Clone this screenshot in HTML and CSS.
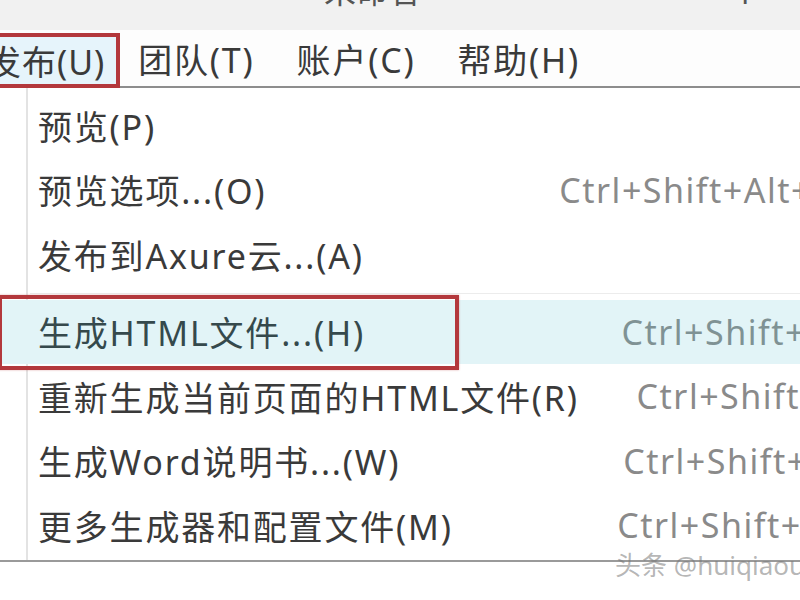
FILE: index.html
```html
<!DOCTYPE html>
<html lang="zh-CN">
<head>
<meta charset="utf-8">
<title>发布菜单</title>
<link rel="stylesheet" href="styles.css">
</head>
<body>
<div class="screen">
  <div class="titlebar">
    <span class="title">未命名</span>
    <span class="title-mark">卜</span>
  </div>
  <div class="menubar">
    <div class="menu-item active">发布(U)</div>
    <div class="menu-item">团队(T)</div>
    <div class="menu-item">账户(C)</div>
    <div class="menu-item">帮助(H)</div>
    <div class="menu-fill"></div>
  </div>
  <div class="dropdown">
    <div class="row"><span class="label">预览(P)</span><span class="key"></span></div>
    <div class="row"><span class="label">预览选项...(O)</span><span class="key">Ctrl+Shift+Alt+P</span></div>
    <div class="row"><span class="label">发布到Axure云...(A)</span><span class="key"></span></div>
    <div class="sep"></div>
    <div class="row hot"><span class="label">生成HTML文件...(H)</span><span class="key">Ctrl+Shift+O</span><span class="mark"></span></div>
    <div class="row"><span class="label">重新生成当前页面的HTML文件(R)</span><span class="key">Ctrl+Shift+I</span></div>
    <div class="row"><span class="label">生成Word说明书...(W)</span><span class="key">Ctrl+Shift+D</span></div>
    <div class="row"><span class="label">更多生成器和配置文件(M)</span><span class="key">Ctrl+Shift+M</span></div>
  </div>
  <div class="watermark">头条 @huiqiaou</div>
</div>
</body>
</html>
```
FILE: styles.css
```css
html, body {
  margin: 0;
  padding: 0;
  background: #ffffff;
}
.screen {
  position: relative;
  width: 800px;
  height: 600px;
  overflow: hidden;
  font-family: "Noto Sans", "Noto Sans CJK SC", sans-serif;
  color: #3a3a3a;
  background: #ffffff;
}
.titlebar {
  height: 30px;
  background: #f1f1f1;
  display: flex;
  overflow: hidden;
}
.title {
  margin-left: 324px;
  margin-top: -25px;
  font-size: 32px;
  line-height: 32px;
  color: #555;
}
.title-mark {
  margin-left: 312px;
  margin-top: -27px;
  font-size: 32px;
  line-height: 32px;
  color: #555;
}
.menubar {
  display: flex;
  height: 58px;
  margin-left: -19px;
  background: #fdfdfd;
}
.menu-item {
  font-size: 34px;
  padding: 4px 24px 0 18px;
  line-height: 52px;
  white-space: nowrap;
  border-bottom: 2px solid #8d8d8d;
  letter-spacing: 1.8px;
}
.menu-item.active {
  padding: 3px 11px 0 2px;
  margin-top: 3px;
  line-height: 44px;
  background: #e6f4fb;
  border: 4px solid #b3383c;
  letter-spacing: 1px;
}
.menu-fill {
  flex: 1;
  border-bottom: 2px solid #8d8d8d;
}
.dropdown {
  width: 834px;
  padding: 5px 0 2px 0;
  border-bottom: 2px solid #9a9a9a;
  background: linear-gradient(to right, #ffffff 0, #ffffff 26px, #e3e3e3 26px, #e3e3e3 28px, #ffffff 28px);
}
.row {
  position: relative;
  display: flex;
  justify-content: space-between;
  align-items: center;
  height: 64.5px;
  padding-left: 38px;
  font-size: 34px;
  white-space: nowrap;
  letter-spacing: 1.8px;
}
.row .key {
  color: #8a8a8a;
  letter-spacing: 1.5px;
}
.sep {
  height: 13px;
  background: linear-gradient(to bottom, transparent 6px, #ececec 6px, #ececec 7px, transparent 7px);
  margin-left: 30px;
}
.row.hot {
  background: #e2f4f7;
}
.row.hot .label {
  color: #35494c;
}
.row.hot .key {
  color: #7f9294;
}
.mark {
  position: absolute;
  left: -2px;
  top: -5px;
  width: 453px;
  height: 67px;
  border: 4px solid #b3383c;
  box-shadow: 0 0 2px rgba(179, 56, 60, 0.4);
}
.watermark {
  position: absolute;
  left: 615px;
  top: 548px;
  font-size: 26px;
  line-height: 34px;
  color: rgba(120, 120, 120, 0.55);
  white-space: nowrap;
}
```
